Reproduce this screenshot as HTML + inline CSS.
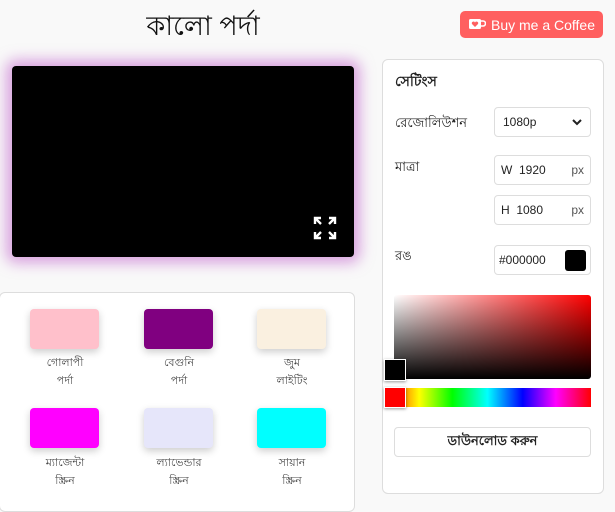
<!DOCTYPE html>
<html><head><meta charset="utf-8"><style>
*{box-sizing:border-box;margin:0;padding:0}
body{width:615px;height:496px;overflow:hidden;background:#f9f9f9;font-family:"Liberation Sans","Noto Sans CJK SC",sans-serif;color:#222;position:relative}
.abs{position:absolute}
.title{left:0;width:406px;top:6px;text-align:center;font-size:27px;color:#111}
.coffee{left:460px;top:11px;width:143px;height:27px;background:#ff5f5f;border-radius:5px;color:#fff;font-size:14px;display:flex;align-items:center;justify-content:center;gap:5px}
.screen{left:12px;top:66px;width:342px;height:191px;background:#000;border-radius:4px;box-shadow:0 0 14px 6px rgba(190,90,200,.55)}
.bottom{left:-1px;top:292px;width:356px;height:220px;background:#fff;border:1px solid #ddd;border-radius:6px}
.sw{position:absolute;width:69px;height:40px;border-radius:4px;box-shadow:0 3px 8px rgba(0,0,0,.2)}
.lbl{position:absolute;width:110px;text-align:center;font-size:11px;line-height:18px;color:#444}
.panel{left:382px;top:59px;width:222px;height:435px;background:#fff;border:1px solid #ddd;border-radius:6px}
.in{position:absolute;left:111px;width:97px;height:30px;border:1px solid #ddd;border-radius:4px;font-size:12px;display:flex;align-items:center;padding:0 6px;color:#222}
.lab{position:absolute;left:12px;font-size:13px;color:#222}
</style></head><body>
<div class="abs title">কালো পর্দা</div>
<div class="abs coffee"><svg width="18" height="13" viewBox="0 0 18 13"><rect x="1" y="1" width="12" height="10" rx="1.5" fill="#fff"/><path d="M13 3h2a2 2 0 0 1 0 5h-2" stroke="#fff" stroke-width="1.6" fill="none"/><path d="M7 9L4 6a1.5 1.5 0 0 1 3-1.5A1.5 1.5 0 0 1 10 6z" fill="#ff5f5f"/></svg>Buy me a Coffee</div>
<div class="abs screen">
<svg class="abs" style="left:301px;top:150px" width="24" height="24" viewBox="0 0 24 24" fill="none" stroke="#fff" stroke-width="2.4"><path d="M2 8V2h6M2 2l6 6M22 8V2h-6M22 2l-6 6M2 16v6h6M2 22l6-6M22 16v6h-6M22 22l-6-6"/></svg>
</div>
<div class="abs bottom">
<div class="sw" style="left:30px;top:16px;background:#ffc0cb"></div>
<div class="sw" style="left:144px;top:16px;background:#800080"></div>
<div class="sw" style="left:257px;top:16px;background:#faf0e0"></div>
<div class="lbl" style="left:10px;top:61px">গোলাপী<br>পর্দা</div>
<div class="lbl" style="left:124px;top:61px">বেগুনি<br>পর্দা</div>
<div class="lbl" style="left:237px;top:61px">জুম<br>লাইটিং</div>
<div class="sw" style="left:30px;top:115px;background:#f0f"></div>
<div class="sw" style="left:144px;top:115px;background:#e6e6fa"></div>
<div class="sw" style="left:257px;top:115px;background:#0ff"></div>
<div class="lbl" style="left:10px;top:161px">ম্যাজেন্টা<br>স্ক্রিন</div>
<div class="lbl" style="left:124px;top:161px">ল্যাভেন্ডার<br>স্ক্রিন</div>
<div class="lbl" style="left:237px;top:161px">সায়ান<br>স্ক্রিন</div>
</div>
<div class="abs panel">
<div class="lab" style="top:10px;font-weight:bold;font-size:14px">সেটিংস</div>
<div class="lab" style="top:54px">রেজোলিউশন</div>
<div class="in" style="top:47px;justify-content:space-between;padding:0 8px">1080p<svg width="10" height="7" viewBox="0 0 10 7"><path d="M1 1l4 4 4-4" stroke="#222" stroke-width="2" fill="none"/></svg></div>
<div class="lab" style="top:98px">মাত্রা</div>
<div class="in" style="top:95px;justify-content:space-between"><span>W&nbsp; 1920</span><span style="color:#555">px</span></div>
<div class="in" style="top:135px;justify-content:space-between"><span>H&nbsp; 1080</span><span style="color:#555">px</span></div>
<div class="lab" style="top:187px">রঙ</div>
<div class="in" style="top:185px;justify-content:space-between;padding:0 4px">#000000<span style="width:21px;height:21px;background:#000;border-radius:3px"></span></div>
<div class="abs" style="left:11px;top:235px;width:197px;height:84px;border-radius:3px;background:linear-gradient(to top,#000,rgba(0,0,0,0)),linear-gradient(to right,#fff,#f00)"></div>
<div class="abs" style="left:1px;top:299px;width:22px;height:22px;background:#000;border:1px solid #fff;box-shadow:0 1px 3px rgba(0,0,0,.4)"></div>
<div class="abs" style="left:1px;top:328px;width:207px;height:19px;background:linear-gradient(to right,#f00,#ff0 17%,#0f0 33%,#0ff 50%,#00f 67%,#f0f 83%,#f00)"></div>
<div class="abs" style="left:1px;top:327px;width:22px;height:21px;background:#f00;border:1px solid #fff;box-shadow:0 1px 3px rgba(0,0,0,.4)"></div>
<div class="abs" style="left:11px;top:367px;width:197px;height:30px;border:1px solid #ddd;border-radius:4px;display:flex;align-items:center;justify-content:center;font-size:13px;font-weight:bold">ডাউনলোড করুন</div>
</div>
</body></html>
